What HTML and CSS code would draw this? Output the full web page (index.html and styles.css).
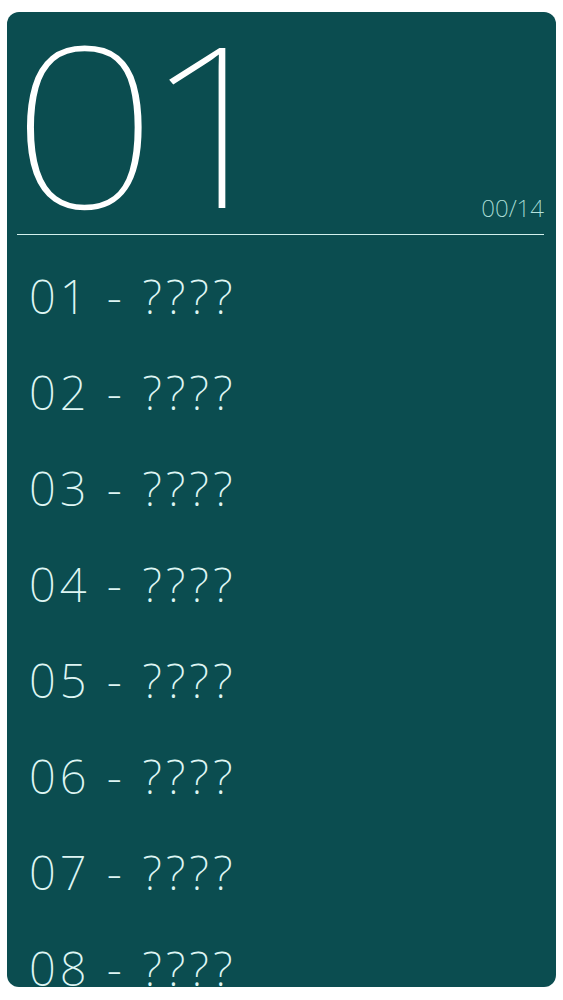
FILE: index.html
```html
<!DOCTYPE html>
<html lang="en">
<head>
    <meta charset="UTF-8">
    <meta name="viewport" content="width=device-width, initial-scale=1.0">
    <title>Levels</title>
    <link rel="stylesheet" href="styles.css">
</head>
<body>
    <div class="card">
        <header class="card-head">
            <span class="big-num">01</span>
            <span class="progress">00/14</span>
        </header>
        <ul class="level-list">
            <li>01 - ????</li>
            <li>02 - ????</li>
            <li>03 - ????</li>
            <li>04 - ????</li>
            <li>05 - ????</li>
            <li>06 - ????</li>
            <li>07 - ????</li>
            <li>08 - ????</li>
        </ul>
    </div>
</body>
</html>
```

FILE: styles.css
```css
body {
    margin: 0;
    padding: 12px 7px 0;
    background-color: #fff;
    font-family: "Noto Sans", sans-serif;
    font-weight: 100;
}
.card {
    height: 975px;
    background-color: #0b4d50;
    border-radius: 12px;
    padding: 0 12px 0 10px;
    overflow: hidden;
}
.card-head {
    display: flex;
    justify-content: space-between;
    align-items: baseline;
    height: 222px;
    border-bottom: 1.5px solid #d3f1ee;
}
.big-num {
    font-size: 224px;
    line-height: 220px;
    color: #fff;
    letter-spacing: -13px;
    margin-left: -6px;
    transform: scaleX(1.15);
    transform-origin: left bottom;
}
.progress {
    align-self: flex-end;
    font-size: 24px;
    font-weight: 200;
    line-height: 24px;
    margin-bottom: 14px;
    color: #b3e2de;
}
.level-list {
    list-style-type: none;
    margin: 0;
    padding: 13px 0 0 12px;
}
.level-list li {
    font-size: 47px;
    font-weight: 200;
    line-height: 96px;
    letter-spacing: 4px;
    color: #def5f3;
}
```
